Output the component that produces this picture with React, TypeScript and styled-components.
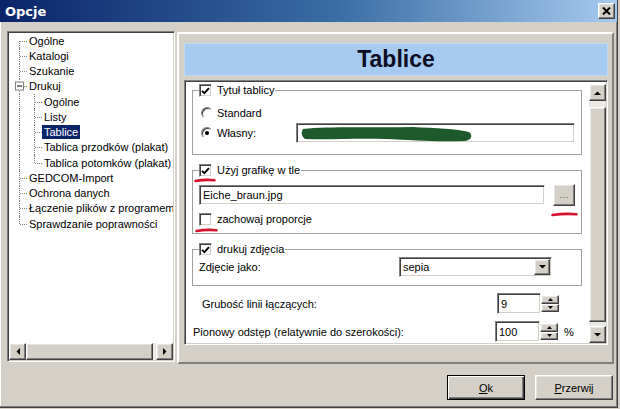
import React from 'react';
import styled, { createGlobalStyle, css } from 'styled-components';

const GlobalStyle = createGlobalStyle`
  html, body { margin: 0; padding: 0; background: #d4d0c8; }
  body { font-family: "Liberation Sans", Arial, sans-serif; font-size: 11px; color: #000; }
  * { box-sizing: border-box; }
`;

const raised = css`
  border: 1px solid;
  border-color: #ffffff #404040 #404040 #ffffff;
  box-shadow: inset -1px -1px #808080, inset 1px 1px #e8e6e2;
  background: #d4d0c8;
`;

const sunken = css`
  border: 1px solid;
  border-color: #808080 #ffffff #ffffff #808080;
  box-shadow: inset 1px 1px #404040, inset -1px -1px #d4d0c8;
`;

const Window = styled.div`
  width: 618px;
  height: 408px;
  display: flex;
  flex-direction: column;
  background: #d4d0c8;
  border-right: 1px solid #404040;
  border-bottom: 1px solid #404040;
  box-shadow: inset -1px -1px #808080, inset 1px 0 #ffffff;
`;

const TitleBar = styled.div`
  height: 22px;
  flex: none;
  display: flex;
  align-items: center;
  justify-content: space-between;
  padding: 0 2px 0 5px;
  background: linear-gradient(90deg, #0a246a 0%, #3a6ea5 55%, #a6caf0 100%);
`;

const Title = styled.span`
  font-family: "DejaVu Sans", Tahoma, sans-serif;
  font-weight: bold;
  font-size: 13px;
  color: #ffffff;
`;

const CloseButton = styled.div`
  ${raised};
  width: 17px;
  height: 16px;
  display: flex;
  align-items: center;
  justify-content: center;
`;

const Body = styled.div`
  flex: 1;
  display: flex;
  flex-direction: column;
  padding: 9px 0 0 7px;
`;

const Main = styled.div`
  display: flex;
  align-items: flex-start;
  gap: 2px;
`;

const TreeBox = styled.div`
  ${sunken};
  width: 168px;
  height: 331px;
  background: #ffffff;
  display: flex;
  flex-direction: column;
  padding: 1px;
`;

const TreeList = styled.div`
  flex: 1;
  overflow: hidden;
  padding: 0 0 0 3px;
`;

const TreeRow = styled.div`
  height: 15.25px;
  display: flex;
  align-items: center;
  white-space: nowrap;
`;

const Indent = styled.span<{ $v: 'full' | 'top' | 'bottom'; $h: boolean }>`
  position: relative;
  flex: none;
  width: 15px;
  align-self: stretch;
  &::before {
    content: '';
    position: absolute;
    left: 7px;
    top: ${p => (p.$v === 'bottom' ? '50%' : '0')};
    bottom: ${p => (p.$v === 'top' ? '50%' : '0')};
    border-left: 1px dotted #808080;
  }
  &::after {
    content: '';
    position: absolute;
    left: 8px;
    right: 0;
    top: 50%;
    border-top: 1px dotted #808080;
    display: ${p => (p.$h ? 'block' : 'none')};
  }
`;

const Expander = styled.span`
  position: absolute;
  left: 3px;
  top: 50%;
  transform: translateY(-50%);
  width: 9px;
  height: 9px;
  border: 1px solid #808080;
  background: #ffffff;
  z-index: 1;
  &::after {
    content: '';
    position: absolute;
    left: 1px;
    right: 1px;
    top: 3px;
    border-top: 1px solid #000;
  }
`;

const TreeLabel = styled.span<{ $selected?: boolean }>`
  padding: 0 2px;
  line-height: 14px;
  background: ${p => (p.$selected ? '#0a246a' : 'transparent')};
  color: ${p => (p.$selected ? '#ffffff' : '#000000')};
`;

const HScroll = styled.div`
  height: 17px;
  flex: none;
  display: flex;
`;

const VScroll = styled.div`
  width: 17px;
  flex: none;
  display: flex;
  flex-direction: column;
  padding-top: 2px;
`;

const ArrowButton = styled.div`
  ${raised};
  width: 17px;
  height: 17px;
  flex: none;
  display: flex;
  align-items: center;
  justify-content: center;
`;

const Track = styled.div<{ $vertical?: boolean }>`
  flex: 1;
  display: flex;
  flex-direction: ${p => (p.$vertical ? 'column' : 'row')};
  background: #ebe9e4;
  padding: ${p => (p.$vertical ? '6px 0 4px 0' : '0 3px 0 0')};
`;

const Thumb = styled.div`
  ${raised};
  flex: 1;
`;

const RightFrame = styled.div`
  width: 437px;
  height: 332px;
  margin-top: 1px;
  border: 2px solid;
  border-color: #ffffff #808080 #808080 #ffffff;
  display: flex;
  flex-direction: column;
  padding: 9px 4px 17px 5px;
`;

const Header = styled.div`
  height: 33px;
  flex: none;
  background: #a6caf0;
  border: 1px solid #c4d8ee;
  display: flex;
  align-items: center;
  justify-content: center;
  font-weight: bold;
  font-size: 23px;
  color: #0d0d24;
`;

const ContentPanel = styled.div`
  ${sunken};
  margin-top: 4px;
  flex: 1;
  background: #ffffff;
  display: flex;
  padding: 1px;
  overflow: hidden;
`;

const Scroller = styled.div`
  flex: 1;
  display: flex;
  flex-direction: column;
  padding: 1px 7px 0 6px;
  overflow: hidden;
`;

const Group = styled.fieldset<{ $mt: number; $pt: number; $pb: number }>`
  margin: ${p => p.$mt}px 0 0 0;
  border: 1px solid #a0a0a0;
  padding: ${p => p.$pt}px 6px ${p => p.$pb}px 6px;
  min-width: 0;
  display: flex;
  flex-direction: column;
`;

const Legend = styled.legend`
  padding: 0 1px 0 0;
  height: 13px;
  line-height: 13px;
  display: flex;
  align-items: center;
  gap: 5px;
`;

const Row = styled.div<{ $h: number; $mt?: number; $pl?: number; $gap?: number }>`
  position: relative;
  height: ${p => p.$h}px;
  margin-top: ${p => p.$mt ?? 0}px;
  padding-left: ${p => p.$pl ?? 0}px;
  gap: ${p => p.$gap ?? 0}px;
  display: flex;
  align-items: center;
  flex: none;
  white-space: nowrap;
`;

const FieldLabel = styled.span<{ $w?: number }>`
  width: ${p => (p.$w ? `${p.$w}px` : 'auto')};
  flex: none;
`;

const CheckBox = styled.span`
  ${sunken};
  position: relative;
  width: 13px;
  height: 13px;
  flex: none;
  background: #ffffff;
  display: inline-flex;
  align-items: center;
  justify-content: center;
`;

const RadioCircle = styled.span<{ $checked?: boolean }>`
  position: relative;
  width: 12px;
  height: 12px;
  flex: none;
  margin: 0 4px 0 2px;
  border-radius: 50%;
  border: 1px solid;
  border-color: #808080 #ffffff #ffffff #808080;
  box-shadow: inset 1px 1px #404040;
  background: #ffffff;
  &::after {
    content: '';
    display: ${p => (p.$checked ? 'block' : 'none')};
    position: absolute;
    left: 3px;
    top: 3px;
    width: 4px;
    height: 4px;
    border-radius: 50%;
    background: #000000;
  }
`;

const TextBox = styled.div<{ $w?: number; $h?: number }>`
  ${sunken};
  position: relative;
  height: ${p => (p.$h ? `${p.$h}px` : '100%')};
  flex: ${p => (p.$w ? 'none' : '1')};
  width: ${p => (p.$w ? `${p.$w}px` : 'auto')};
  background: #ffffff;
  display: flex;
  align-items: center;
  padding-left: 3px;
`;

const SmallButton = styled.div`
  ${raised};
  position: relative;
  width: 22px;
  height: 22px;
  flex: none;
  margin-left: 8px;
  display: flex;
  align-items: center;
  justify-content: center;
  font-size: 9px;
  color: #404040;
  letter-spacing: 0.5px;
`;

const DropButton = styled.div`
  ${raised};
  width: 16px;
  height: 16px;
  margin: 0 1px 0 auto;
  display: flex;
  align-items: center;
  justify-content: center;
`;

const SpinGroup = styled.div<{ $inputW: number }>`
  display: flex;
  height: 21px;
  flex: none;
  & > ${TextBox} {
    width: ${p => p.$inputW}px;
    flex: none;
  }
`;

const SpinColumn = styled.div`
  width: 18px;
  display: flex;
  flex-direction: column;
  padding: 2px 0;
`;

const SpinButton = styled.div`
  ${raised};
  flex: 1;
  display: flex;
  align-items: center;
  justify-content: center;
`;

const Unit = styled.span`
  margin-left: 6px;
`;

const Mark = styled.svg<{ $left: number; $top: number }>`
  position: absolute;
  left: ${p => p.$left}px;
  top: ${p => p.$top}px;
  overflow: visible;
  pointer-events: none;
  z-index: 2;
`;

const Scribble = styled.svg`
  position: absolute;
  left: 4px;
  top: 1px;
`;

const Footer = styled.div`
  display: flex;
  justify-content: flex-end;
  gap: 10px;
  margin-top: 11px;
  padding-right: 4px;
`;

const DialogButton = styled.div<{ $default?: boolean }>`
  width: 78px;
  height: 25px;
  display: flex;
  align-items: center;
  justify-content: center;
  background: #d4d0c8;
  border: 1px solid;
  border-color: ${p => (p.$default ? '#000000' : '#ffffff #404040 #404040 #ffffff')};
  box-shadow: ${p =>
    p.$default
      ? 'inset 1px 1px #ffffff, inset -1px -1px #404040, inset -2px -2px #808080'
      : 'inset -1px -1px #808080, inset 1px 1px #e8e6e2'};
  & u { text-decoration: underline; }
`;

const Tri = ({ dir }: { dir: 'up' | 'down' | 'left' | 'right' }) => {
  const pts = {
    up: '0,4 7,4 3.5,0.5',
    down: '0,0 7,0 3.5,3.5',
    left: '4,0 4,7 0.5,3.5',
    right: '0,0 0,7 3.5,3.5',
  }[dir];
  const vert = dir === 'up' || dir === 'down';
  return (
    <svg width={vert ? 7 : 4} height={vert ? 4 : 7} viewBox={vert ? '0 0 7 4' : '0 0 4 7'}>
      <polygon points={pts} fill="#000" />
    </svg>
  );
};

const SmallTri = ({ dir }: { dir: 'up' | 'down' }) => (
  <svg width="5" height="3" viewBox="0 0 5 3">
    <polygon points={dir === 'up' ? '0,3 5,3 2.5,0' : '0,0 5,0 2.5,3'} fill="#000" />
  </svg>
);

const RedMark = ({ left, top, width }: { left: number; top: number; width: number }) => (
  <Mark $left={left} $top={top} width={width} height={5} viewBox={`0 0 ${width} 5`}>
    <path
      d={`M1.5 3 Q${width / 2} 1.2 ${width - 1.5} 2.2`}
      fill="none"
      stroke="#d6122e"
      strokeWidth="2.6"
      strokeLinecap="round"
    />
  </Mark>
);

const Check = ({ checked, children }: { checked?: boolean; children?: React.ReactNode }) => (
  <CheckBox>
    {checked && (
      <svg width="9" height="8" viewBox="0 0 9 8">
        <path d="M1 3.8 L3.4 6.2 L8 1.2" fill="none" stroke="#000" strokeWidth="1.8" />
      </svg>
    )}
    {children}
  </CheckBox>
);

type TreeItem = { label: string; level: 0 | 1; pos?: 'first' | 'last'; expanded?: boolean; selected?: boolean };

const tree: TreeItem[] = [
  { label: 'Ogólne', level: 0, pos: 'first' },
  { label: 'Katalogi', level: 0 },
  { label: 'Szukanie', level: 0 },
  { label: 'Drukuj', level: 0, expanded: true },
  { label: 'Ogólne', level: 1 },
  { label: 'Listy', level: 1 },
  { label: 'Tablice', level: 1, selected: true },
  { label: 'Tablica przodków (plakat)', level: 1 },
  { label: 'Tablica potomków (plakat)', level: 1, pos: 'last' },
  { label: 'GEDCOM-Import', level: 0 },
  { label: 'Ochrona danych', level: 0 },
  { label: 'Łączenie plików z programem', level: 0 },
  { label: 'Sprawdzanie poprawności', level: 0, pos: 'last' },
];

const vOf = (pos?: 'first' | 'last') => (pos === 'first' ? 'bottom' : pos === 'last' ? 'top' : 'full');

const Spinner = ({ value, inputW }: { value: string; inputW: number }) => (
  <SpinGroup $inputW={inputW}>
    <TextBox>{value}</TextBox>
    <SpinColumn>
      <SpinButton>
        <SmallTri dir="up" />
      </SpinButton>
      <SpinButton>
        <SmallTri dir="down" />
      </SpinButton>
    </SpinColumn>
  </SpinGroup>
);

export default function App() {
  return (
    <>
      <GlobalStyle />
      <Window>
        <TitleBar>
          <Title>Opcje</Title>
          <CloseButton>
            <svg width="9" height="8" viewBox="0 0 9 8">
              <path d="M1 0.5 L8 7.5 M8 0.5 L1 7.5" stroke="#000" strokeWidth="2" />
            </svg>
          </CloseButton>
        </TitleBar>
        <Body>
          <Main>
            <TreeBox>
              <TreeList>
                {tree.map((it, i) => (
                  <TreeRow key={i}>
                    {it.level === 0 ? (
                      <Indent $v={vOf(it.pos)} $h>
                        {it.expanded && <Expander />}
                      </Indent>
                    ) : (
                      <>
                        <Indent $v="full" $h={false} />
                        <Indent $v={vOf(it.pos)} $h />
                      </>
                    )}
                    <TreeLabel $selected={it.selected}>{it.label}</TreeLabel>
                  </TreeRow>
                ))}
              </TreeList>
              <HScroll>
                <ArrowButton>
                  <Tri dir="left" />
                </ArrowButton>
                <Track>
                  <Thumb />
                </Track>
                <ArrowButton>
                  <Tri dir="right" />
                </ArrowButton>
              </HScroll>
            </TreeBox>

            <RightFrame>
              <Header>Tablice</Header>
              <ContentPanel>
                <Scroller>
                  <Group $mt={1} $pt={6} $pb={11}>
                    <Legend>
                      <Check checked />
                      <span>Tytuł tablicy</span>
                    </Legend>
                    <Row $h={19}>
                      <RadioCircle />
                      <span>Standard</span>
                    </Row>
                    <Row $h={20} $mt={1}>
                      <RadioCircle $checked />
                      <FieldLabel $w={79}>Własny:</FieldLabel>
                      <TextBox>
                        <Scribble width="172" height="18" viewBox="0 0 172 18">
                          <path
                            d="M2 4 C30 1 70 3 112 2 C135 3 156 4 168 7 C172 10 171 15 164 16 C132 17 112 15 84 14 C56 13 28 15 4 14 C0 11 0 7 2 4 Z"
                            fill="#1d5a2b"
                          />
                        </Scribble>
                      </TextBox>
                    </Row>
                  </Group>

                  <Group $mt={9} $pt={7} $pb={7}>
                    <Legend>
                      <Check checked>
                        <RedMark left={-6} top={13} width={22} />
                      </Check>
                      <span>Użyj grafikę w tle</span>
                    </Legend>
                    <Row $h={22}>
                      <TextBox $h={20}>Eiche_braun.jpg</TextBox>
                      <SmallButton>
                        ...
                        <RedMark left={-3} top={27} width={27} />
                      </SmallButton>
                    </Row>
                    <Row $h={14} $mt={6} $gap={5}>
                      <Check>
                        <RedMark left={-5} top={14} width={23} />
                      </Check>
                      <span>zachowaj proporcje</span>
                    </Row>
                  </Group>

                  <Group $mt={9} $pt={1} $pb={8}>
                    <Legend>
                      <Check checked />
                      <span>drukuj zdjęcia</span>
                    </Legend>
                    <Row $h={20}>
                      <FieldLabel $w={200}>Zdjęcie jako:</FieldLabel>
                      <TextBox $w={153}>
                        sepia
                        <DropButton>
                          <Tri dir="down" />
                        </DropButton>
                      </TextBox>
                    </Row>
                  </Group>

                  <Row $h={21} $mt={7} $pl={10}>
                    <FieldLabel $w={295}>Grubość linii łączących:</FieldLabel>
                    <Spinner value="9" inputW={44} />
                  </Row>

                  <Row $h={21} $mt={7} $pl={1}>
                    <FieldLabel $w={302}>Pionowy odstęp (relatywnie do szerokości):</FieldLabel>
                    <Spinner value="100" inputW={45} />
                    <Unit>%</Unit>
                  </Row>
                </Scroller>
                <VScroll>
                  <ArrowButton>
                    <Tri dir="up" />
                  </ArrowButton>
                  <Track $vertical>
                    <Thumb />
                  </Track>
                  <ArrowButton>
                    <Tri dir="down" />
                  </ArrowButton>
                </VScroll>
              </ContentPanel>
            </RightFrame>
          </Main>
          <Footer>
            <DialogButton $default>
              <span>
                <u>O</u>k
              </span>
            </DialogButton>
            <DialogButton>
              <span>
                <u>P</u>rzerwij
              </span>
            </DialogButton>
          </Footer>
        </Body>
      </Window>
    </>
  );
}
